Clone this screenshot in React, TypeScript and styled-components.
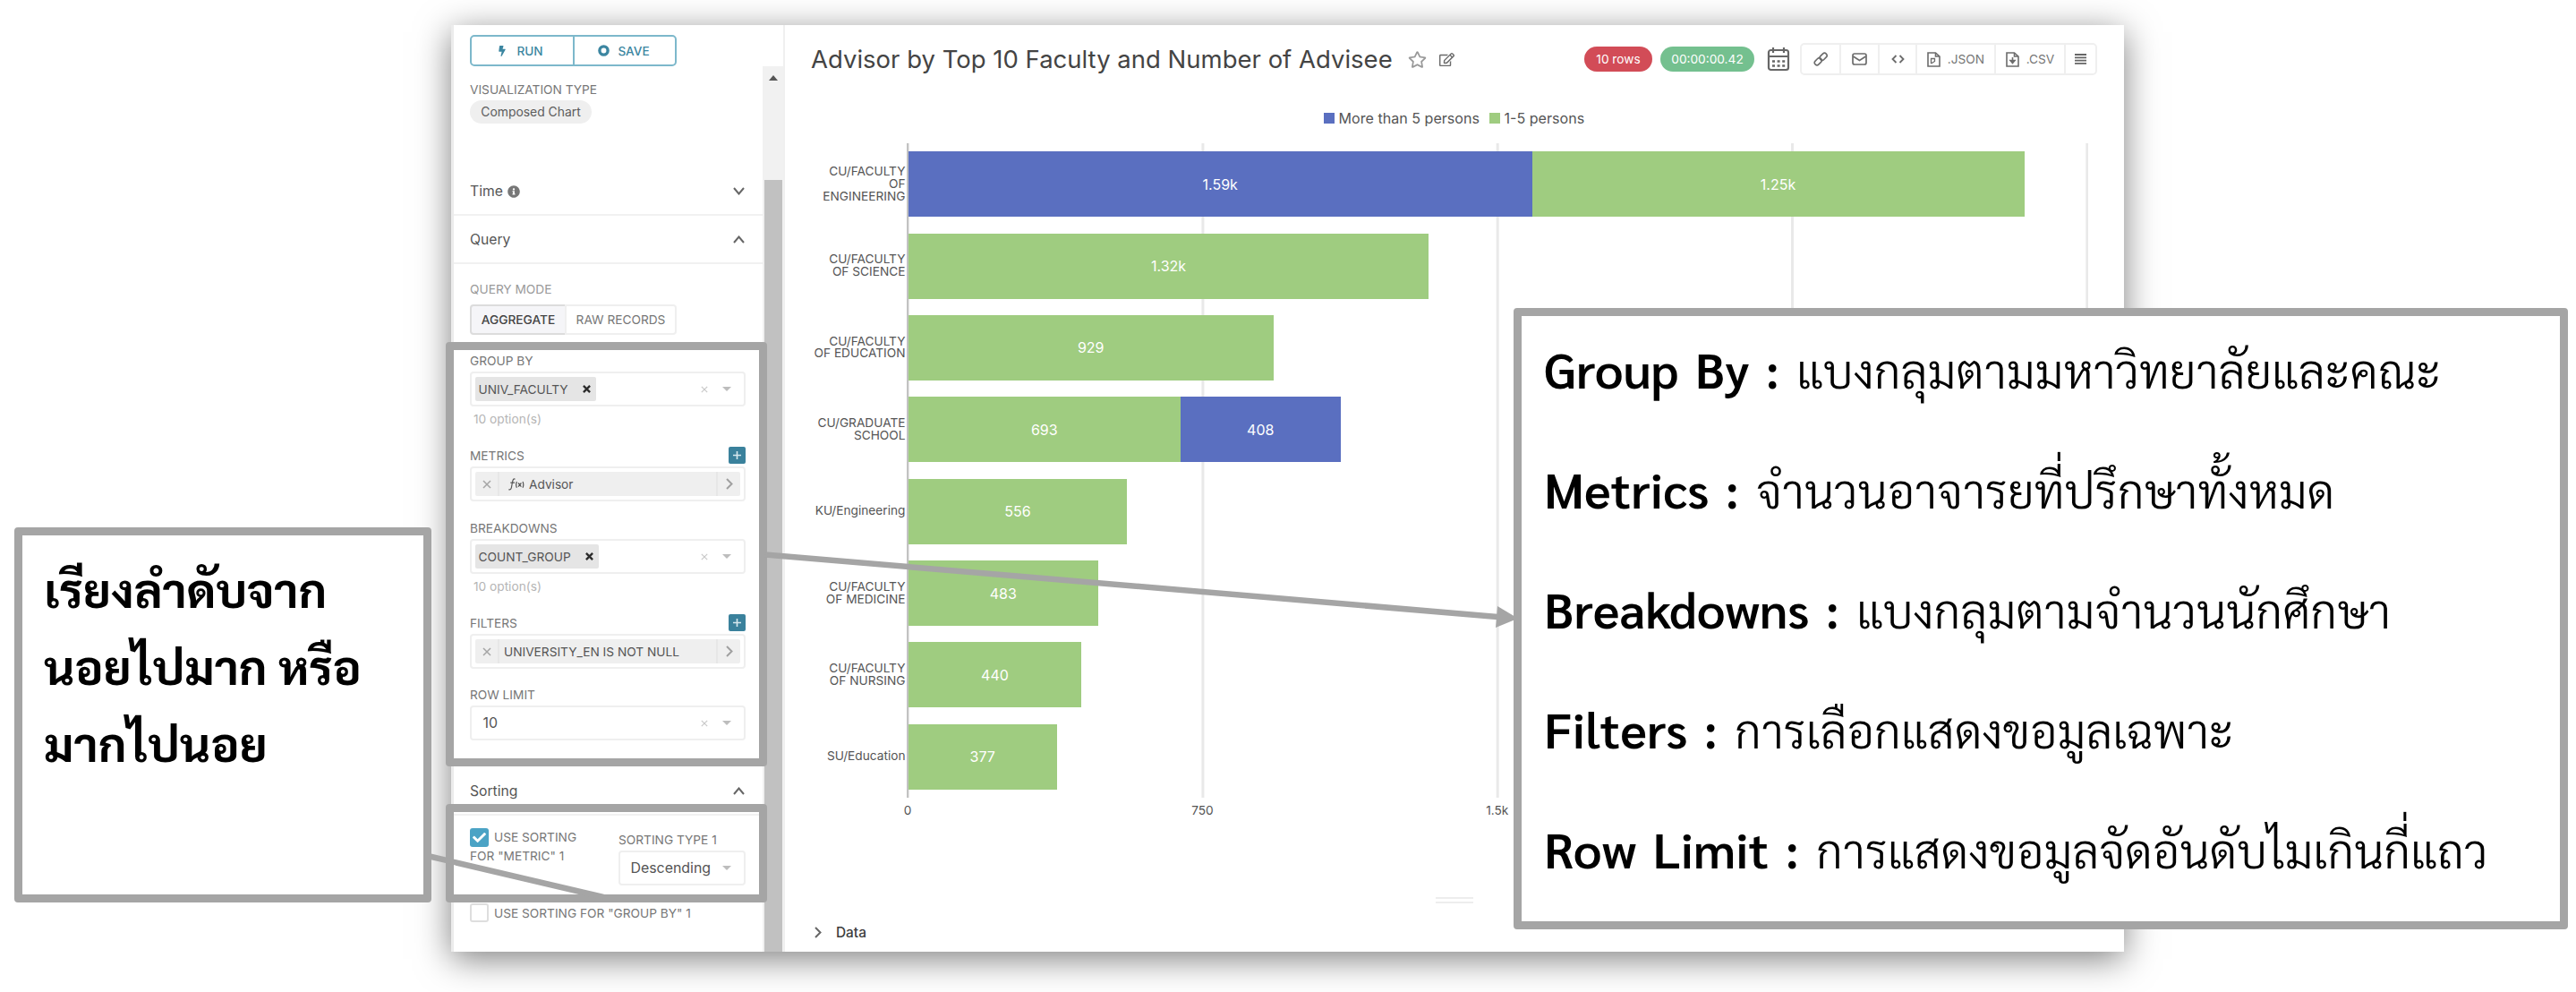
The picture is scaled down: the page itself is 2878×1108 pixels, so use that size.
import React from 'react';
import styled, { createGlobalStyle } from 'styled-components';
import { FaBolt, FaInfoCircle, FaCheck, FaRegStar, FaRegEdit } from 'react-icons/fa';

const GlobalStyle = createGlobalStyle`
  * { box-sizing: border-box; }
  body { margin: 0; background: #fff; }
`;

const GREEN = '#9fcc80';
const BLUE = '#5a6fc0';
const MARK = '#a5a5a5';

const Page = styled.div`
  position: relative;
  width: 2878px;
  height: 1108px;
  overflow: hidden;
  padding: 28px 505px 45px 504px;
  background: #fff;
  font-family: Inter, sans-serif;
  font-size: 13.7px;
  color: #666;
`;

const Panel = styled.div`
  display: flex;
  height: 1035px;
  background: #fff;
  border-left: 3px solid #ececec;
  box-shadow: 0 8px 36px rgba(0, 0, 0, 0.5);
`;

/* ---------- sidebar ---------- */

const Sidebar = styled.aside`
  width: 370px;
  border-right: 2px solid #f0f0f0;
  display: flex;
  flex-direction: column;
`;

const RunBar = styled.div`
  height: 46px;
  padding: 11px 0 0 18px;
  display: flex;
`;

const RunButton = styled.button<{ $last?: boolean }>`
  width: ${p => (p.$last ? 116 : 117)}px;
  height: 35px;
  padding: 0 ${p => (p.$last ? 2 : 5)}px 0 0;
  display: flex;
  align-items: center;
  justify-content: center;
  gap: ${p => (p.$last ? 9 : 10)}px;
  border: 2px solid #7db8cb;
  margin-left: ${p => (p.$last ? -2 : 0)}px;
  border-radius: ${p => (p.$last ? '0 5px 5px 0' : '5px 0 0 5px')};
  background: #fff;
  color: #3c86a1;
  font: 500 13.6px Inter, sans-serif;
  svg { display: block; }
`;

const Scroller = styled.div`
  flex: 1;
  display: flex;
  min-height: 0;
`;

const Controls = styled.div`
  width: 345px;
  padding-right: 19px;
  display: flex;
  flex-direction: column;
`;

const Track = styled.div`
  width: 23px;
  display: flex;
  flex-direction: column;
  align-items: center;
  background: #f1f1f1;
`;

const UpArrow = styled.div`
  margin-top: 10px;
  border: 5px solid transparent;
  border-top: 0;
  border-bottom: 6px solid #555;
`;

const Thumb = styled.div`
  width: 20px;
  margin-top: 111px;
  flex: 1;
  background: #c1c1c1;
`;

const VizType = styled.div`
  height: 113px;
  padding: 17px 0 0 18px;
`;

const Label = styled.div<{ $muted?: boolean }>`
  height: 18px;
  line-height: 19px;
  white-space: nowrap;
  color: ${p => (p.$muted ? '#9a9a9a' : '#777')};
`;

const Pill = styled.span`
  display: flex;
  align-items: center;
  justify-content: center;
  width: 136px;
  height: 26px;
  margin-top: 3px;
  border-radius: 13px;
  background: #efefef;
  font-size: 13.9px;
  color: #5c5c5c;
`;

const SectionHead = styled.div`
  height: 54px;
  margin-right: -19px;
  padding: 1px 20px 0 18px;
  display: flex;
  align-items: center;
  border-bottom: 2px solid #f1f1f1;
  font-size: 15.7px;
  color: #555;
`;

const HeadText = styled.span`
  flex: 1;
  display: flex;
  align-items: center;
  gap: 5px;
  svg { color: #777; }
`;

const QueryMode = styled.div`
  padding: 19px 0 0 18px;
  height: 78px;
`;

const Toggle = styled.div`
  display: flex;
  margin-top: 8px;
`;

const ToggleItem = styled.div<{ $on?: boolean }>`
  width: ${p => (p.$on ? 108 : 125)}px;
  height: 34px;
  margin-left: ${p => (p.$on ? 0 : -2)}px;
  display: flex;
  align-items: center;
  justify-content: center;
  border: 2px solid ${p => (p.$on ? '#dcdcdc' : '#efefef')};
  border-radius: ${p => (p.$on ? '4px 0 0 4px' : '0 4px 4px 0')};
  background: ${p => (p.$on ? '#f5f5f8' : '#fff')};
  color: ${p => (p.$on ? '#444' : '#777')};
  font-weight: ${p => (p.$on ? 500 : 400)};
`;

const Field = styled.div<{ $gap: number }>`
  margin: ${p => p.$gap}px 0 0 18px;
  display: flex;
  flex-direction: column;
  gap: 3px;
`;

const FieldTop = styled.div`
  display: flex;
  justify-content: space-between;
  height: 18px;
`;

const AddButton = styled.span`
  width: 19px;
  height: 19px;
  margin-top: -1px;
  display: flex;
  align-items: center;
  justify-content: center;
  border-radius: 2px;
  background: #3a819c;
`;

const Control = styled.div<{ $w?: number }>`
  width: ${p => p.$w ?? 308}px;
  height: 39px;
  padding: 0 14px 0 4px;
  display: flex;
  align-items: center;
  border: 2px solid #efefef;
  border-radius: 4px;
`;

const Tag = styled.span`
  height: 27px;
  padding: 0 6px 0 3.5px;
  display: flex;
  align-items: center;
  gap: 16px;
  border-radius: 2px;
  background: #e5e5e5;
  color: #555;
`;

const Value = styled.span<{ $pad: number }>`
  padding-left: ${p => p.$pad}px;
  font-size: 15.9px;
  color: #555;
`;

const Tools = styled.span`
  margin-left: auto;
  display: flex;
  align-items: center;
  gap: 16px;
`;

const Help = styled.div`
  height: 18px;
  margin-top: 2px;
  padding-left: 4px;
  line-height: 18px;
  color: #b5b5b5;
`;

const Option = styled.div`
  flex: 1;
  margin-right: -10px;
  height: 27px;
  display: flex;
  align-items: center;
  border-radius: 2px;
  background: #efefef;
  color: #555;
`;

const OptionEnd = styled.span<{ $left?: boolean }>`
  width: 27px;
  height: 27px;
  display: flex;
  align-items: center;
  justify-content: center;
  ${p => (p.$left ? 'border-right' : 'border-left')}: 2px solid #e7e7e7;
`;

const OptionText = styled.span<{ $pad: number }>`
  flex: 1;
  padding-left: ${p => p.$pad}px;
  display: flex;
  align-items: center;
  gap: 5px;
  white-space: nowrap;
`;

const SectionGap = styled.div`
  height: 30px;
`;

const SortRow = styled.div`
  height: 98px;
  padding: 14px 0 0 18px;
  display: flex;
  justify-content: space-between;
`;

const SortText = styled.div`
  width: 140px;
  line-height: 21px;
  color: #777;
  white-space: nowrap;
`;

const SortType = styled.div`
  margin-top: 4px;
  display: flex;
  flex-direction: column;
  gap: 3px;
`;

const CheckRow = styled.div`
  display: flex;
  align-items: center;
  gap: 6px;
`;

const Checkbox = styled.span<{ $on?: boolean }>`
  width: 21px;
  height: 21px;
  display: flex;
  align-items: center;
  justify-content: center;
  border-radius: 3px;
  border: ${p => (p.$on ? 0 : 2)}px solid #dedede;
  background: ${p => (p.$on ? '#4ba3c5' : '#fff')};
  color: #fff;
`;

const GroupSort = styled.div`
  padding-left: 18px;
  color: #777;
  white-space: nowrap;
`;

/* ---------- chart area ---------- */

const Main = styled.main`
  flex: 1;
  display: flex;
  flex-direction: column;
`;

const Header = styled.header`
  height: 76px;
  padding: 0 30px 0 29px;
  display: flex;
  align-items: center;
`;

const Title = styled.h1`
  margin: 0 17px 1px 0;
  font: 400 27.5px Inter, sans-serif;
  color: #444;
  white-space: nowrap;
`;

const TitleIcons = styled.span`
  display: flex;
  align-items: center;
  gap: 14px;
  color: #6a6a6a;
`;

const HeaderTools = styled.div`
  margin-left: auto;
  display: flex;
  align-items: center;
`;

const Badge = styled.span<{ $w: number; $bg: string }>`
  width: ${p => p.$w}px;
  height: 28px;
  margin-right: 9px;
  display: flex;
  align-items: center;
  justify-content: center;
  border-radius: 14px;
  background: ${p => p.$bg};
  color: #fff;
`;

const CalendarIcon = styled.svg`
  margin: 0 11px 0 5px;
`;

const ButtonGroup = styled.div`
  display: flex;
  height: 36px;
  border: 2px solid #efefef;
  border-radius: 5px;
`;

const GroupItem = styled.span<{ $w: number }>`
  width: ${p => p.$w}px;
  display: flex;
  align-items: center;
  justify-content: center;
  gap: 8px;
  color: #777;
  & + & { border-left: 2px solid #efefef; }
`;

const Legend = styled.div`
  height: 56px;
  padding-left: 602px;
  display: flex;
  align-items: center;
  gap: 11px;
  font-size: 16.1px;
  color: #555;
`;

const LegendItem = styled.span`
  display: flex;
  align-items: center;
  gap: 4.5px;
`;

const Swatch = styled.i<{ $c: string }>`
  width: 12px;
  height: 12px;
  background: ${p => p.$c};
`;

const Chart = styled.div`
  display: flex;
  height: 731px;
`;

const Categories = styled.div`
  width: 136px;
  padding-right: 1.5px;
  display: flex;
  flex-direction: column;
`;

const Category = styled.div`
  flex: 1;
  display: flex;
  flex-direction: column;
  align-items: flex-end;
  justify-content: center;
  line-height: 13.8px;
  color: #555;
  white-space: nowrap;
`;

const Plot = styled.div`
  width: 1320px;
  display: flex;
  flex-direction: column;
  background: linear-gradient(to right, #e9e9e9 2.5px, transparent 2.5px) -1.9px 0 / 329.3px 100%;
  border-left: 2.5px solid #c2c2c2;
`;

const BarRow = styled.div`
  flex: 1;
  display: flex;
  align-items: center;
`;

const Bar = styled.div<{ $c: string }>`
  height: 73px;
  display: flex;
  align-items: center;
  justify-content: center;
  background: ${p => p.$c};
  color: #fff;
  font-size: 16px;
`;

const Ticks = styled.div`
  display: flex;
  height: 29px;
  margin-left: -27.5px;
`;

const Tick = styled.span`
  width: 329.3px;
  text-align: center;
  line-height: 29px;
  color: #555;
`;

const Spacer = styled.div`
  flex: 1;
  display: flex;
  align-items: flex-end;
  padding-left: 727px;
`;

const Handle = styled.div`
  width: 42px;
  height: 7px;
  border: 2px solid #ededed;
  border-left: 0;
  border-right: 0;
`;

const DataRow = styled.div`
  height: 54px;
  padding: 10px 0 0 33px;
  display: flex;
  align-items: center;
  gap: 16px;
  font-size: 15.4px;
  font-weight: 500;
  color: #3c3c3c;
`;

/* ---------- annotations floating over the screen ---------- */

const Frame = styled.div<{ $y: number; $h: number }>`
  position: absolute;
  left: 498px;
  top: ${p => p.$y}px;
  width: 359px;
  height: ${p => p.$h}px;
  border: 9.5px solid ${MARK};
  border-radius: 4px;
`;

const Connectors = styled.svg`
  position: absolute;
  left: 0;
  top: 0;
`;

const Note = styled.div`
  position: absolute;
  border: 9.5px solid ${MARK};
  border-radius: 4px;
  background: #fff;
  color: #000;
  font-family: Sarabun, 'Noto Sans', sans-serif;
  white-space: nowrap;
`;

const SortNote = styled(Note)`
  left: 16px;
  top: 589px;
  width: 466px;
  height: 419px;
  padding: 16px 0 0 24px;
  font-size: 53.2px;
  font-weight: 700;
  line-height: 86px;
`;

const QueryNote = styled(Note)`
  left: 1691px;
  top: 344px;
  width: 1178px;
  height: 694px;
  padding: 0 0 0 25px;
  display: flex;
  flex-direction: column;
  font-size: 52.4px;
  font-weight: 300;
  line-height: 134px;
`;

const NoteLine = styled.div`
  display: flex;
  align-items: baseline;
  height: 134px;
  margin-top: -9px;
  margin-bottom: 9px;
  gap: 19px;
`;

const Term = styled.b`
  font-size: 55.6px;
  font-weight: 600;
  word-spacing: 5px;
`;

const Small = ({ s, c, w = 1.6 }: { s: number; c: string; w?: number }) => (
  <svg width={s} height={s} viewBox="0 0 10 10" stroke={c} strokeWidth={w} fill="none">
    <path d="M1 1 9 9M9 1 1 9" />
  </svg>
);

const Caret = () => (
  <svg width="10" height="5" viewBox="0 0 10 5"><path d="M0 0H10L5 5Z" fill="#bdbdbd" /></svg>
);

const Chevron = ({ d, c = '#666' }: { d: 'up' | 'down' | 'right'; c?: string }) => (
  <svg
    width={d === 'right' ? 8 : 13}
    height={d === 'right' ? 13 : 9}
    viewBox={d === 'right' ? '0 0 8 13' : '0 0 13 9'}
    fill="none" stroke={c} strokeWidth="2"
  >
    <path d={d === 'up' ? 'M1 8 6.5 1.5 12 8' : d === 'down' ? 'M1 1 6.5 7.5 12 1' : 'M1 1 6.5 6.5 1 12'} />
  </svg>
);

const Plus = () => (
  <svg width="9" height="9" viewBox="0 0 9 9" stroke="#d6e8ee" strokeWidth="1.6"><path d="M4.5 0V9M0 4.5H9" /></svg>
);

const Fx = () => (
  <svg width="18" height="14" viewBox="0 0 18 14" fill="none" stroke="#555" strokeWidth="1.2">
    <path d="M7.5 1.2C5.5.3 5 2 4.5 4.5L3.4 10.5C3 12.6 2 13.2.4 12.6M2.3 5.2H7" />
    <path d="M9.4 4C8.4 6.2 8.4 8.6 9.4 10.8M16 4C17 6.2 17 8.6 16 10.8M11 5.5 14.4 9.6M14.4 5.5 11 9.6" />
  </svg>
);

const FileIcon = ({ json }: { json?: boolean }) => (
  <svg width="15" height="17" viewBox="0 0 15 17" fill="none" stroke="#6c6c6c" strokeWidth="1.6">
    <path d="M1 1H9.5L14 5V16H1ZM9.5 1V5H14" />
    {json ? <path d="M4.5 13V7.5H8.5V10.5L4.5 13" strokeWidth="1.3" /> : <path d="M7.5 6V11M5 9.5 7.5 12.5 10 9.5Z" />}
  </svg>
);

type Seg = { c: string; v: string; w: number };
const rows: { label: string[]; bars: Seg[] }[] = [
  { label: ['CU/FACULTY', 'OF', 'ENGINEERING'], bars: [{ c: BLUE, v: '1.59k', w: 696.5 }, { c: GREEN, v: '1.25k', w: 550 }] },
  { label: ['CU/FACULTY', 'OF SCIENCE'], bars: [{ c: GREEN, v: '1.32k', w: 581 }] },
  { label: ['CU/FACULTY', 'OF EDUCATION'], bars: [{ c: GREEN, v: '929', w: 407.5 }] },
  { label: ['CU/GRADUATE', 'SCHOOL'], bars: [{ c: GREEN, v: '693', w: 303.5 }, { c: BLUE, v: '408', w: 179.5 }] },
  { label: ['KU/Engineering'], bars: [{ c: GREEN, v: '556', w: 244 }] },
  { label: ['CU/FACULTY', 'OF MEDICINE'], bars: [{ c: GREEN, v: '483', w: 211.5 }] },
  { label: ['CU/FACULTY', 'OF NURSING'], bars: [{ c: GREEN, v: '440', w: 193 }] },
  { label: ['SU/Education'], bars: [{ c: GREEN, v: '377', w: 165.5 }] },
];

const notes = [
  ['Group By :', 'แบงกลุมตามมหาวิทยาลัยและคณะ'],
  ['Metrics :', 'จำนวนอาจารยที่ปรึกษาทั้งหมด'],
  ['Breakdowns :', 'แบงกลุมตามจำนวนนักศึกษา'],
  ['Filters :', 'การเลือกแสดงขอมูลเฉพาะ'],
  ['Row Limit :', 'การแสดงขอมูลจัดอันดับไมเกินกี่แถว'],
];

const ClearTools = () => (
  <Tools><Small s={8} c="#c9c9c9" w={1.5} /><Caret /></Tools>
);

const TagField = ({ label, tag, gap }: { label: string; tag: string; gap: number }) => (
  <Field $gap={gap}>
    <Label>{label}</Label>
    <Control><Tag>{tag}<Small s={9} c="#2c2c2c" w={2.6} /></Tag><ClearTools /></Control>
    <Help>10 option(s)</Help>
  </Field>
);

const OptionField = ({ label, fx, text }: { label: string; fx?: boolean; text: string }) => (
  <Field $gap={23}>
    <FieldTop><Label>{label}</Label><AddButton><Plus /></AddButton></FieldTop>
    <Control>
      <Option>
        <OptionEnd $left><Small s={10} c="#a5a5a5" w={1.5} /></OptionEnd>
        <OptionText $pad={fx ? 10 : 5}>{fx && <Fx />}{text}</OptionText>
        <OptionEnd><Chevron d="right" c="#a0a0a0" /></OptionEnd>
      </Option>
    </Control>
  </Field>
);

export default function App() {
  return (
    <Page>
      <GlobalStyle />
      <Panel>
        <Sidebar>
          <RunBar>
            <RunButton><FaBolt size={12} />RUN</RunButton>
            <RunButton $last>
              <svg width="13" height="13" viewBox="0 0 13 13" fill="none" stroke="currentColor">
                <circle cx="6.5" cy="6.5" r="4.6" strokeWidth="3.4" />
              </svg>
              SAVE
            </RunButton>
          </RunBar>
          <Scroller>
            <Controls>
              <VizType>
                <Label>VISUALIZATION TYPE</Label>
                <Pill>Composed Chart</Pill>
              </VizType>
              <SectionHead>
                <HeadText>Time <FaInfoCircle size={14} /></HeadText>
                <Chevron d="down" />
              </SectionHead>
              <SectionHead>
                <HeadText>Query</HeadText>
                <Chevron d="up" />
              </SectionHead>
              <QueryMode>
                <Label $muted>QUERY MODE</Label>
                <Toggle>
                  <ToggleItem $on>AGGREGATE</ToggleItem>
                  <ToggleItem>RAW RECORDS</ToggleItem>
                </Toggle>
              </QueryMode>
              <TagField label="GROUP BY" tag="UNIV_FACULTY" gap={21} />
              <OptionField label="METRICS" fx text="Advisor" />
              <TagField label="BREAKDOWNS" tag="COUNT_GROUP" gap={21} />
              <OptionField label="FILTERS" text="UNIVERSITY_EN IS NOT NULL" />
              <Field $gap={20}>
                <Label>ROW LIMIT</Label>
                <Control><Value $pad={8.5}>10</Value><ClearTools /></Control>
              </Field>
              <SectionGap />
              <SectionHead>
                <HeadText>Sorting</HeadText>
                <Chevron d="up" />
              </SectionHead>
              <SortRow>
                <SortText>
                  <CheckRow><Checkbox $on><FaCheck size={15} /></Checkbox>USE SORTING</CheckRow>
                  FOR "METRIC" 1
                </SortText>
                <SortType>
                  <Label>SORTING TYPE 1</Label>
                  <Control $w={142}>
                    <Value $pad={7.5}>Descending</Value>
                    <Tools><Caret /></Tools>
                  </Control>
                </SortType>
              </SortRow>
              <GroupSort>
                <CheckRow><Checkbox />USE SORTING FOR "GROUP BY" 1</CheckRow>
              </GroupSort>
            </Controls>
            <Track><UpArrow /><Thumb /></Track>
          </Scroller>
        </Sidebar>
        <Main>
          <Header>
            <Title>Advisor by Top 10 Faculty and Number of Advisee</Title>
            <TitleIcons><FaRegStar size={21} color="#999" /><FaRegEdit size={17} /></TitleIcons>
            <HeaderTools>
              <Badge $w={76} $bg="#d24c57">10 rows</Badge>
              <Badge $w={105} $bg="#74c08f">00:00:00.42</Badge>
              <CalendarIcon width="26" height="28" viewBox="0 0 26 28" fill="none" stroke="#666" strokeWidth="2.2">
                <rect x="2" y="4" width="22" height="22" rx="2.5" />
                <path d="M2 11H24M7 1V7M19 1V7" />
                <path d="M6 16.5H20.5M6 21.5H20.5" strokeWidth="2.6" strokeDasharray="3 2.6" />
              </CalendarIcon>
              <ButtonGroup>
                <GroupItem $w={42}>
                  <svg width="16" height="16" viewBox="0 0 16 16" fill="none" stroke="#6c6c6c" strokeWidth="1.6">
                    <rect x="6.6" y="2.6" width="9" height="5.4" rx="2.7" transform="rotate(-45 11.1 5.3)" />
                    <rect x=".8" y="8" width="9" height="5.4" rx="2.7" transform="rotate(-45 5.3 10.7)" />
                  </svg>
                </GroupItem>
                <GroupItem $w={43}>
                  <svg width="17" height="14" viewBox="0 0 17 14" fill="none" stroke="#6c6c6c" strokeWidth="1.7">
                    <rect x="1" y="1" width="15" height="12" rx="2" />
                    <path d="M1.5 4 8.5 8.5 15.5 4" />
                  </svg>
                </GroupItem>
                <GroupItem $w={42}>
                  <svg width="15" height="10" viewBox="0 0 15 10" fill="none" stroke="#6c6c6c" strokeWidth="1.8">
                    <path d="M5.5 1 1.5 5 5.5 9M9.5 1 13.5 5 9.5 9" />
                  </svg>
                </GroupItem>
                <GroupItem $w={88}><FileIcon json />.JSON</GroupItem>
                <GroupItem $w={78}><FileIcon />.CSV</GroupItem>
                <GroupItem $w={35}>
                  <svg width="13" height="12" viewBox="0 0 13 12" stroke="#666" strokeWidth="1.8">
                    <path d="M0 1H13M0 4.3H13M0 7.6H13M0 10.9H13" />
                  </svg>
                </GroupItem>
              </ButtonGroup>
            </HeaderTools>
          </Header>
          <Legend>
            <LegendItem><Swatch $c={BLUE} />More than 5 persons</LegendItem>
            <LegendItem><Swatch $c={GREEN} />1-5 persons</LegendItem>
          </Legend>
          <Chart>
            <Categories>
              {rows.map((r, i) => (
                <Category key={i}>{r.label.map(l => <span key={l}>{l}</span>)}</Category>
              ))}
            </Categories>
            <Plot>
              {rows.map((r, i) => (
                <BarRow key={i}>
                  {r.bars.map(b => <Bar key={b.v} $c={b.c} style={{ width: b.w }}>{b.v}</Bar>)}
                </BarRow>
              ))}
            </Plot>
          </Chart>
          <Ticks><Tick>0</Tick><Tick>750</Tick><Tick>1.5k</Tick></Ticks>
          <Spacer><Handle /></Spacer>
          <DataRow><Chevron d="right" />Data</DataRow>
        </Main>
      </Panel>

      <Frame $y={382} $h={473.5} />
      <Frame $y={898} $h={110} />
      <Connectors width="2878" height="1108" viewBox="0 0 2878 1108">
        <path d="M855 619.5 1676 689.3" stroke={MARK} strokeWidth="6.5" />
        <path d="M1673 677 1696 690.8 1671 701Z" fill={MARK} />
        <path d="M480 956.5 674 1002" stroke={MARK} strokeWidth="6.5" />
      </Connectors>
      <SortNote>
        <div>เรียงลำดับจาก</div>
        <div>นอยไปมาก หรือ</div>
        <div>มากไปนอย</div>
      </SortNote>
      <QueryNote>
        {notes.map(([t, d]) => <NoteLine key={t}><Term>{t}</Term><span>{d}</span></NoteLine>)}
      </QueryNote>
    </Page>
  );
}
